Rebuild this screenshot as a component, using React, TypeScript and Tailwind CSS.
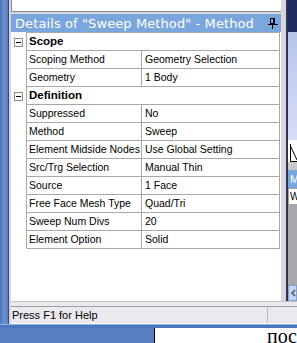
import React from 'react';

type Row = { kind: 'header'; label: string } | { kind: 'item'; label: string; value: string };

const rows: Row[] = [
  { kind: 'header', label: 'Scope' },
  { kind: 'item', label: 'Scoping Method', value: 'Geometry Selection' },
  { kind: 'item', label: 'Geometry', value: '1 Body' },
  { kind: 'header', label: 'Definition' },
  { kind: 'item', label: 'Suppressed', value: 'No' },
  { kind: 'item', label: 'Method', value: 'Sweep' },
  { kind: 'item', label: 'Element Midside Nodes', value: 'Use Global Setting' },
  { kind: 'item', label: 'Src/Trg Selection', value: 'Manual Thin' },
  { kind: 'item', label: 'Source', value: '1 Face' },
  { kind: 'item', label: 'Free Face Mesh Type', value: 'Quad/Tri' },
  { kind: 'item', label: 'Sweep Num Divs', value: '20' },
  { kind: 'item', label: 'Element Option', value: 'Solid' },
];

function MinusBox() {
  return (
    <div className="w-[9px] h-[9px] border border-[#8c8c8c] bg-white flex items-center justify-center">
      <div className="w-[5px] h-[1px] bg-black" />
    </div>
  );
}

function Pin() {
  return (
    <svg width="10" height="11" viewBox="0 0 10 11" className="shrink-0">
      <rect x="2.5" y="0.5" width="4" height="5" fill="none" stroke="#000" />
      <rect x="5" y="0" width="2" height="6" fill="#000" />
      <rect x="0" y="6" width="10" height="1" fill="#000" />
      <rect x="4" y="7" width="1" height="4" fill="#000" />
    </svg>
  );
}

function DetailsTable() {
  return (
    <div className="flex flex-col">
      {rows.map((r, i) => (
        <div key={i} className="flex h-[18px]">
          <div className="w-[15px] flex items-center justify-center bg-white">
            {r.kind === 'header' && <MinusBox />}
          </div>
          <div className="flex-1 flex border-l border-b border-r border-[#a9a9a9]">
            {r.kind === 'header' ? (
              <div className="pl-[2px] flex items-center font-bold text-[11.5px] text-black">{r.label}</div>
            ) : (
              <>
                <div className="w-[115px] pl-[2px] flex items-center border-r border-[#a9a9a9] text-black whitespace-nowrap overflow-hidden">
                  {r.label}
                </div>
                <div className="flex-1 pl-[3px] flex items-center text-black whitespace-nowrap">{r.value}</div>
              </>
            )}
          </div>
          <div className="w-[1px] bg-white" />
        </div>
      ))}
    </div>
  );
}

export default function App() {
  return (
    <div className="w-[297px] h-[343px] overflow-hidden flex flex-col bg-[#5a7fc0] text-[10.5px] leading-none font-['Liberation_Sans',Arial,sans-serif]">
      {/* upper area */}
      <div className="flex h-[305px]">
        <div className="w-[8px] bg-gradient-to-r from-[#4d72b4] via-[#6c91cf] to-[#5b80c1]" />
        <div className="w-[280px] flex border-l border-[#2d4a84]">
          <div className="w-[2px] bg-[#d8d6dc]" />
          <div className="w-[270px] flex flex-col bg-white">
            <div className="h-[12px] bg-white border-l border-b border-[#8c8c8c]" />
            <div className="h-[2px] bg-[#d8d6dc]" />
            <div className="h-[18px] bg-[#79a6dc] flex items-center justify-between pl-[4px] pr-[3px] text-white text-[13px] font-['DejaVu_Sans',sans-serif] tracking-[0.1px]">
              <span className="whitespace-nowrap">Details of "Sweep Method" - Method</span>
              <Pin />
            </div>
            <div className="h-[1px] bg-[#a9a9a9] ml-[15px] mr-[1px]" />
            <DetailsTable />
            <div className="flex-1 bg-white" />
          </div>
          <div className="w-[5px] bg-[#d8d6dc]" />
          <div className="w-[2px] bg-[#2a3550]" />
        </div>
        {/* desktop behind on the right */}
        <div className="w-[9px] flex flex-col">
          <div className="h-[32px] bg-[#1d2b5c]" />
          <div className="h-[108px] bg-gradient-to-b from-[#b8c4ec] to-[#d8def6]" />
          <div className="h-[22px] bg-white flex items-end pl-[2px]">
            <svg width="7" height="18" viewBox="0 0 7 18">
              <path d="M0.5 0 V17.5 H7 M0.5 2 L7 16" stroke="#000" fill="none" />
            </svg>
          </div>
          <div className="h-[8px] bg-[#c8c8cc]" />
          <div className="h-[18px] bg-[#79a6dc] pl-[2px] flex items-center text-white text-[11px]">M</div>
          <div className="h-[16px] bg-white border-l border-t border-[#a0a0a0] pl-[1px] flex items-center text-[10px]">W</div>
          <div className="flex-1 bg-[#a8a8ac]" />
          <div className="h-[16px] bg-[#c4d4f2] border border-[#8aa0c8] flex items-center pl-[2px]">
            <svg width="5" height="8" viewBox="0 0 5 8">
              <path d="M4 1 L1 4 L4 7" stroke="#555" strokeWidth="1.5" fill="none" />
            </svg>
          </div>
        </div>
      </div>
      {/* status bar */}
      <div className="flex h-[23px]">
        <div className="w-[8px] bg-gradient-to-r from-[#4d72b4] via-[#6c91cf] to-[#5b80c1]" />
        <div className="w-[1px] bg-[#2d4a84]" />
        <div className="w-[2px] bg-[#d8d6dc]" />
        <div className="flex-1 flex flex-col bg-[#ebe9ed]">
          <div className="h-[1px] bg-[#c4c4c8]" />
          <div className="h-[4px] bg-[#ebe9ed]" />
          <div className="h-[1px] bg-[#a0a0a4]" />
          <div className="flex-1 flex border-b border-white">
            <div className="w-[256px] pl-[1px] flex items-center text-black text-[11px]">Press F1 for Help</div>
            <div className="w-[1px] bg-[#b8b8bc]" />
            <div className="flex-1" />
          </div>
        </div>
      </div>
      {/* bottom strip */}
      <div className="flex flex-col flex-1">
        <div className="h-[4px] bg-[#4e76bf] border-t border-[#8fb0e6]" />
        <div className="flex-1 flex">
          <div className="w-[154px] bg-[#5a7fc0]" />
          <div className="w-[1px] bg-black" />
          <div className="flex-1 bg-white flex justify-end overflow-hidden">
            <span className="text-[20px] leading-[14px] pt-[1px] font-['Liberation_Serif',serif] text-black">пос</span>
          </div>
        </div>
      </div>
    </div>
  );
}
